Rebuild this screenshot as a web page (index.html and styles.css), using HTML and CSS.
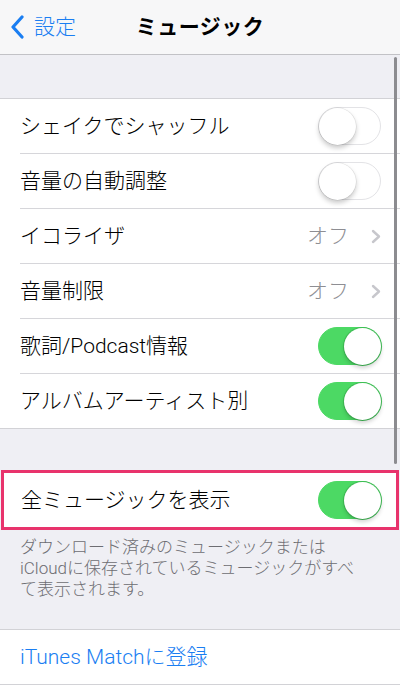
FILE: index.html
```html
<!DOCTYPE html>
<html lang="ja">
<head>
  <meta charset="UTF-8">
  <meta name="viewport" content="width=device-width, initial-scale=1.0">
  <title>ミュージック</title>
  <link rel="stylesheet" href="styles.css">
</head>
<body>
  <header class="nav">
    <a class="nav-back" href="#">
      <svg class="back-chevron" width="14" height="24" viewBox="0 0 14 24">
        <path d="M12 2 L3 12 L12 22" fill="none" stroke="#1a7ef2" stroke-width="3.2" stroke-linecap="round" stroke-linejoin="round"/>
      </svg>
      <span>設定</span>
    </a>
    <h1 class="nav-title">ミュージック</h1>
  </header>

  <div class="gap gap-top"></div>

  <ul class="group">
    <li class="row">
      <span class="label">シェイクでシャッフル</span>
      <span class="switch"></span>
    </li>
    <li class="row">
      <span class="label">音量の自動調整</span>
      <span class="switch"></span>
    </li>
    <li class="row">
      <span class="label">イコライザ</span>
      <span class="detail">オフ</span>
      <svg class="chevron" width="10" height="15" viewBox="0 0 10 15">
        <path d="M2 2 L8 7.5 L2 13" fill="none" stroke="#c7c7cc" stroke-width="2.4" stroke-linecap="round" stroke-linejoin="round"/>
      </svg>
    </li>
    <li class="row">
      <span class="label">音量制限</span>
      <span class="detail">オフ</span>
      <svg class="chevron" width="10" height="15" viewBox="0 0 10 15">
        <path d="M2 2 L8 7.5 L2 13" fill="none" stroke="#c7c7cc" stroke-width="2.4" stroke-linecap="round" stroke-linejoin="round"/>
      </svg>
    </li>
    <li class="row">
      <span class="label">歌詞/Podcast情報</span>
      <span class="switch on"></span>
    </li>
    <li class="row">
      <span class="label">アルバムアーティスト別</span>
      <span class="switch on"></span>
    </li>
  </ul>

  <div class="gap gap-mid"></div>

  <div class="highlight">
    <div class="row single">
      <span class="label">全ミュージックを表示</span>
      <span class="switch on"></span>
    </div>
  </div>

  <p class="footnote">ダウンロード済みのミュージックまたは<br>iCloudに保存されているミュージックがすべ<br>て表示されます。</p>

  <ul class="group">
    <li class="row">
      <span class="label link">iTunes Matchに登録</span>
    </li>
  </ul>

  <div class="scroll-indicator"></div>
</body>
</html>
```

FILE: styles.css
```css
body {
  margin: 0;
  width: 400px;
  height: 685px;
  overflow: hidden;
  position: relative;
  background-color: #efeff4;
  font-family: Roboto, "Noto Sans CJK JP", sans-serif;
  font-weight: 300;
  color: #000;
}

.nav {
  height: 54px;
  background-color: #f7f7f8;
  border-bottom: 1px solid #c2c2c6;
  display: flex;
  align-items: center;
  justify-content: center;
  position: relative;
}

.nav-back {
  position: absolute;
  left: 10px;
  top: 0;
  height: 54px;
  display: flex;
  align-items: center;
  gap: 10px;
  color: #1a7ef2;
  text-decoration: none;
  font-size: 21px;
  line-height: 24px;
}

.back-chevron {
  display: block;
}

.nav-title {
  margin: 0;
  font-family: "Liberation Sans", "Noto Sans CJK JP", sans-serif;
  font-size: 21px;
  font-weight: 700;
  line-height: 24px;
  letter-spacing: 0.5px;
}

.gap-top {
  height: 43px;
}

.gap-mid {
  height: 41px;
}

.group {
  list-style: none;
  margin: 0;
  padding: 0;
  background: #fff;
  border-top: 1px solid #d2d2d6;
  border-bottom: 1px solid #d2d2d6;
}

.row {
  height: 54px;
  margin-left: 20px;
  padding-right: 19px;
  display: flex;
  align-items: center;
  border-bottom: 1px solid #d6d6da;
  font-size: 21px;
  line-height: 24px;
}

.row:last-child {
  border-bottom: none;
}

.label {
  flex: 1;
  white-space: nowrap;
}

.link {
  color: #1a7ef2;
}

.detail {
  color: #8e8e93;
  margin-right: 22px;
}

.chevron {
  display: block;
}

.switch {
  width: 61px;
  height: 36px;
  border-radius: 19px;
  border: 1.5px solid #e3e3e6;
  background: #fff;
  position: relative;
  flex-shrink: 0;
}

.switch::after {
  content: "";
  position: absolute;
  top: -0.5px;
  left: -0.5px;
  width: 37px;
  height: 37px;
  border-radius: 50%;
  background: #fff;
  box-shadow: 0 3px 5px rgba(0, 0, 0, 0.22), 0 0 0 0.5px rgba(0, 0, 0, 0.1);
}

.switch.on {
  background: #4cd964;
  border-color: #4cd964;
}

.switch.on::after {
  left: auto;
  right: -0.5px;
  box-shadow: 0 3px 4px rgba(0, 0, 0, 0.18), 0 0 0 1px #3fbf55;
}

.highlight {
  margin: 0 1px;
  border: 3px solid #e8336c;
  background: #fff;
}

.highlight .row {
  margin-left: 17px;
  padding-right: 15px;
}

.single {
  border-bottom: none;
}

.footnote {
  margin: 0;
  padding: 7px 20px 28px;
  height: 64px;
  font-size: 17px;
  line-height: 21px;
  color: #6d6d72;
  white-space: nowrap;
}

.scroll-indicator {
  position: absolute;
  top: 57px;
  left: 394px;
  width: 3px;
  height: 407px;
  border-radius: 2px;
  background: #8c8c90;
}
```
